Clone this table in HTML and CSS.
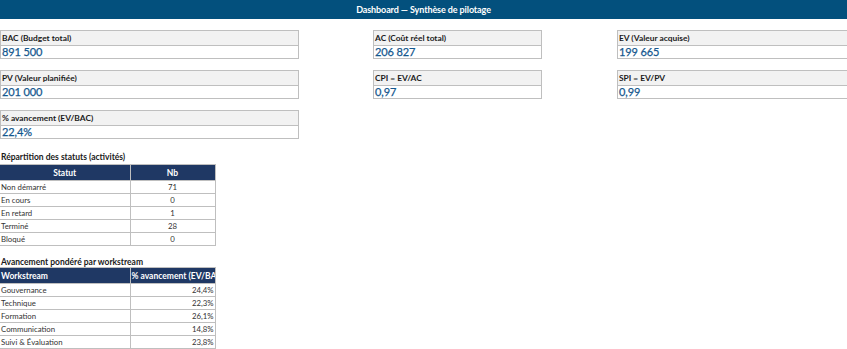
FILE: index.html
```html
<!DOCTYPE html>
<html lang="fr">
<head>
<meta charset="utf-8">
<title>Dashboard — Synthèse de pilotage</title>
<link rel="stylesheet" href="styles.css">
</head>
<body>
<div class="page">
  <header class="topbar"><span class="title">Dashboard — Synthèse de pilotage</span></header>

  <section class="kpis">
    <div class="kpi c1"><div class="lbl">BAC (Budget total)</div><div class="val">891 500</div></div>
    <div class="kpi c3"><div class="lbl">AC (Coût réel total)</div><div class="val">206 827</div></div>
    <div class="kpi c5"><div class="lbl">EV (Valeur acquise)</div><div class="val">199 665</div></div>

    <div class="kpi c1"><div class="lbl">PV (Valeur planifiée)</div><div class="val">201 000</div></div>
    <div class="kpi c3"><div class="lbl">CPI = EV/AC</div><div class="val">0,97</div></div>
    <div class="kpi c5"><div class="lbl">SPI = EV/PV</div><div class="val">0,99</div></div>

    <div class="kpi c1"><div class="lbl">% avancement (EV/BAC)</div><div class="val">22,4%</div></div>
  </section>

  <section class="block first">
    <h2 class="sec">Répartition des statuts (activités)</h2>
    <table class="tbl">
      <colgroup><col class="ca"><col class="cb"></colgroup>
      <thead><tr><th class="center">Statut</th><th class="center">Nb</th></tr></thead>
      <tbody>
        <tr><td>Non démarré</td><td class="center">71</td></tr>
        <tr><td>En cours</td><td class="center">0</td></tr>
        <tr><td>En retard</td><td class="center">1</td></tr>
        <tr><td>Terminé</td><td class="center">28</td></tr>
        <tr><td>Bloqué</td><td class="center">0</td></tr>
      </tbody>
    </table>
  </section>

  <section class="block second">
    <h2 class="sec">Avancement pondéré par workstream</h2>
    <table class="tbl">
      <colgroup><col class="ca"><col class="cb"></colgroup>
      <thead><tr><th>Workstream</th><th>% avancement (EV/BAC)</th></tr></thead>
      <tbody>
        <tr><td>Gouvernance</td><td class="right">24,4%</td></tr>
        <tr><td>Technique</td><td class="right">22,3%</td></tr>
        <tr><td>Formation</td><td class="right">26,1%</td></tr>
        <tr><td>Communication</td><td class="right">14,8%</td></tr>
        <tr><td>Suivi &amp; Évaluation</td><td class="right">23,8%</td></tr>
      </tbody>
    </table>
  </section>
</div>
</body>
</html>
```

FILE: styles.css
```css
html, body {
  margin: 0;
  padding: 0;
  background: #ffffff;
  overflow: hidden;
}

body {
  font-family: Lato, "Open Sans", "Liberation Sans", sans-serif;
  color: #262626;
  width: 847px;
  height: 349px;
}

.page {
  width: 847px;
}

.topbar {
  height: 19px;
  background: #03507d;
  display: flex;
  align-items: center;
  justify-content: center;
}

.title {
  color: #ffffff;
  font-weight: 700;
  font-size: 9px;
  letter-spacing: -0.1px;
}

.kpis {
  display: grid;
  grid-template-columns: 299px 74px 169px 75px 230px;
  row-gap: 11px;
  margin-top: 11px;
}

.kpi {
  border: 1px solid #bfbfbf;
  grid-column: 1;
}

.kpi.c3 { grid-column: 3; }
.kpi.c5 { grid-column: 5; border-right: none; }

.lbl {
  height: 14px;
  line-height: 14px;
  background: #f2f2f2;
  border-bottom: 1px solid #bfbfbf;
  font-size: 8.4px;
  font-weight: 700;
  padding-left: 1px;
  white-space: nowrap;
  color: #1a1a1a;
}

.val {
  height: 12px;
  line-height: 12px;
  font-size: 11px;
  font-weight: 400;
  color: #14578e;
  padding-left: 1px;
  white-space: nowrap;
  letter-spacing: -0.1px;
  -webkit-text-stroke: 0.25px #14578e;
}

.block.first { margin-top: 13px; }
.block.second { margin-top: 11px; }

.sec {
  margin: 0 0 2px 1px;
  font-size: 8.5px;
  font-weight: 700;
  line-height: 10px;
  color: #1a1a1a;
}

.block.second .sec { margin-bottom: 0; }

.tbl {
  border-collapse: collapse;
  table-layout: fixed;
  width: 215px;
  font-size: 7.8px;
}

.tbl .ca { width: 130px; }
.tbl .cb { width: 85px; }

.tbl th {
  background: #1f3864;
  color: #ffffff;
  font-weight: 700;
  font-size: 8.5px;
  height: 15px;
  padding: 0 1px;
  text-align: left;
  border: 1px solid #bfbfbf;
  white-space: nowrap;
  overflow: hidden;
  text-overflow: clip;
}

.tbl td {
  height: 12px;
  padding: 0 1px;
  border: 1px solid #bfbfbf;
  line-height: 12px;
  white-space: nowrap;
  overflow: hidden;
  color: #333333;
}

.tbl td:first-child, .tbl th:first-child { border-left: none; }

.tbl .center { text-align: center; }
.tbl .right { text-align: right; }
```
